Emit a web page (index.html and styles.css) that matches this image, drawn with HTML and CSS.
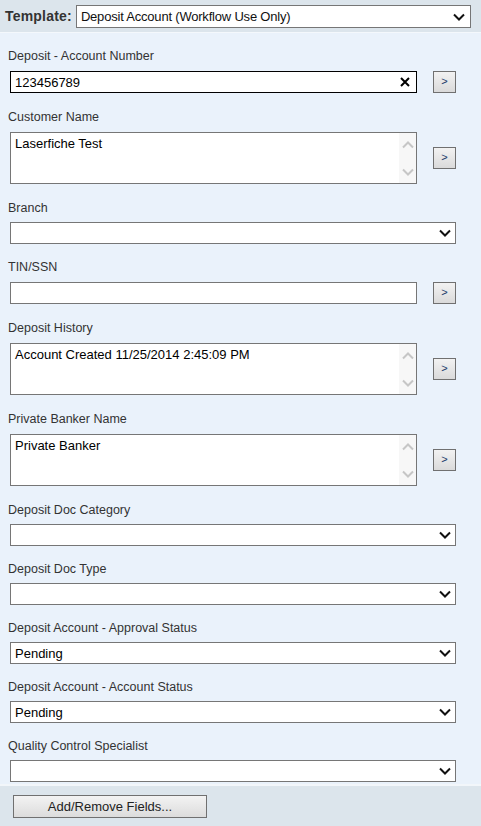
FILE: index.html
```html
<!DOCTYPE html>
<html>
<head>
<meta charset="utf-8">
<link rel="stylesheet" href="styles.css">
</head>
<body>
<div class="header">
  <span class="tpl-label">Template:</span>
  <div class="select tpl-select">
    <span class="val">Deposit Account (Workflow Use Only)</span>
    <svg class="chev" width="12" height="8" viewBox="0 0 12 8"><polyline points="1,1.5 6,6.5 11,1.5" fill="none" stroke="#111" stroke-width="2"/></svg>
  </div>
</div>
<div class="panel">
  <div class="field has-row">
    <div class="label">Deposit - Account Number</div>
    <div class="row">
      <div class="input focus"><span class="val">123456789</span>
        <svg class="clear" width="10" height="10" viewBox="0 0 10 10"><path d="M1 1L9 9M9 1L1 9" stroke="#000" stroke-width="2"/></svg>
      </div>
      <div class="btn">&gt;</div>
    </div>
  </div>
  <div class="field has-row">
    <div class="label">Customer Name</div>
    <div class="row">
      <div class="textarea"><span class="val">Laserfiche Test</span>
        <div class="sbar">
          <svg width="12" height="8" viewBox="0 0 12 8"><polyline points="1,6.5 6,1.5 11,6.5" fill="none" stroke="#c6c6c6" stroke-width="2"/></svg>
          <svg width="12" height="8" viewBox="0 0 12 8"><polyline points="1,1.5 6,6.5 11,1.5" fill="none" stroke="#c6c6c6" stroke-width="2"/></svg>
        </div>
      </div>
      <div class="btn">&gt;</div>
    </div>
  </div>
  <div class="field">
    <div class="label">Branch</div>
    <div class="select full">
      <span class="val"></span>
      <svg class="chev" width="12" height="8" viewBox="0 0 12 8"><polyline points="1,1.5 6,6.5 11,1.5" fill="none" stroke="#111" stroke-width="2"/></svg>
    </div>
  </div>
  <div class="field has-row">
    <div class="label">TIN/SSN</div>
    <div class="row">
      <div class="input"><span class="val"></span></div>
      <div class="btn">&gt;</div>
    </div>
  </div>
  <div class="field has-row">
    <div class="label">Deposit History</div>
    <div class="row">
      <div class="textarea"><span class="val">Account Created 11/25/2014 2:45:09 PM</span>
        <div class="sbar">
          <svg width="12" height="8" viewBox="0 0 12 8"><polyline points="1,6.5 6,1.5 11,6.5" fill="none" stroke="#c6c6c6" stroke-width="2"/></svg>
          <svg width="12" height="8" viewBox="0 0 12 8"><polyline points="1,1.5 6,6.5 11,1.5" fill="none" stroke="#c6c6c6" stroke-width="2"/></svg>
        </div>
      </div>
      <div class="btn">&gt;</div>
    </div>
  </div>
  <div class="field has-row">
    <div class="label">Private Banker Name</div>
    <div class="row">
      <div class="textarea"><span class="val">Private Banker</span>
        <div class="sbar">
          <svg width="12" height="8" viewBox="0 0 12 8"><polyline points="1,6.5 6,1.5 11,6.5" fill="none" stroke="#c6c6c6" stroke-width="2"/></svg>
          <svg width="12" height="8" viewBox="0 0 12 8"><polyline points="1,1.5 6,6.5 11,1.5" fill="none" stroke="#c6c6c6" stroke-width="2"/></svg>
        </div>
      </div>
      <div class="btn">&gt;</div>
    </div>
  </div>
  <div class="field">
    <div class="label">Deposit Doc Category</div>
    <div class="select full">
      <span class="val"></span>
      <svg class="chev" width="12" height="8" viewBox="0 0 12 8"><polyline points="1,1.5 6,6.5 11,1.5" fill="none" stroke="#111" stroke-width="2"/></svg>
    </div>
  </div>
  <div class="field">
    <div class="label">Deposit Doc Type</div>
    <div class="select full">
      <span class="val"></span>
      <svg class="chev" width="12" height="8" viewBox="0 0 12 8"><polyline points="1,1.5 6,6.5 11,1.5" fill="none" stroke="#111" stroke-width="2"/></svg>
    </div>
  </div>
  <div class="field">
    <div class="label">Deposit Account - Approval Status</div>
    <div class="select full">
      <span class="val">Pending</span>
      <svg class="chev" width="12" height="8" viewBox="0 0 12 8"><polyline points="1,1.5 6,6.5 11,1.5" fill="none" stroke="#111" stroke-width="2"/></svg>
    </div>
  </div>
  <div class="field">
    <div class="label">Deposit Account - Account Status</div>
    <div class="select full">
      <span class="val">Pending</span>
      <svg class="chev" width="12" height="8" viewBox="0 0 12 8"><polyline points="1,1.5 6,6.5 11,1.5" fill="none" stroke="#111" stroke-width="2"/></svg>
    </div>
  </div>
  <div class="field">
    <div class="label">Quality Control Specialist</div>
    <div class="select full">
      <span class="val"></span>
      <svg class="chev" width="12" height="8" viewBox="0 0 12 8"><polyline points="1,1.5 6,6.5 11,1.5" fill="none" stroke="#111" stroke-width="2"/></svg>
    </div>
  </div>
</div>
<div class="footer">
  <div class="add-btn">Add/Remove Fields...</div>
</div>
</body>
</html>
```

FILE: styles.css
```css
html, body {
  margin: 0;
  padding: 0;
  width: 481px;
  height: 826px;
  overflow: hidden;
  background: #dce5ec;
  font-family: "Liberation Sans", Arial, sans-serif;
  color: #222;
}

.header {
  height: 33px;
  box-sizing: border-box;
  display: flex;
  align-items: flex-start;
  padding: 5px 10px 0 5px;
  gap: 4px;
  background: #dce5ec;
  border-bottom: 1px solid #f4f8fc;
}

.tpl-label {
  font-weight: bold;
  font-size: 14px;
  letter-spacing: 0.2px;
  line-height: 23px;
  color: #333;
}

.select, .input, .textarea {
  box-sizing: border-box;
  background: #fff;
  border: 1px solid #767676;
  display: flex;
  align-items: center;
  position: relative;
  font-size: 13px;
  color: #000;
}

.tpl-select {
  flex: 1;
  height: 23px;
  padding: 0 4px 0 4px;
  color: #111;
  letter-spacing: -0.2px;
}

.val {
  flex: 1;
  white-space: nowrap;
}

.chev {
  display: block;
  margin-right: 1px;
}

.panel {
  background: #eaf2fb;
  padding: 15px 25px 2px 8px;
  border-bottom: 2px solid #f2f6fa;
}

.field {
  margin-bottom: 15px;
}

.field.has-row {
  margin-bottom: 16px;
}

.field.has-row .label {
  margin-bottom: 7px;
}

.field:last-child {
  margin-bottom: 0;
}

.label {
  font-size: 12.5px;
  line-height: 16px;
  height: 16px;
  color: #333;
  margin-bottom: 6px;
}

.row {
  display: flex;
  align-items: center;
  gap: 16px;
  margin-left: 2px;
}

.input {
  width: 407px;
  height: 22px;
  padding: 0 6px 0 4px;
}

.input.focus {
  border-color: #000;
}

.clear {
  display: block;
}

.textarea {
  width: 407px;
  height: 52px;
  align-items: stretch;
  padding: 0 0 0 4px;
}

.textarea .val {
  padding-top: 3px;
  line-height: 16px;
}

.sbar {
  width: 17px;
  background: #f7f7f7;
  display: flex;
  flex-direction: column;
  justify-content: space-between;
  align-items: center;
  padding: 8px 0 7px;
}

.sbar svg {
  display: block;
}

.btn {
  box-sizing: border-box;
  width: 23px;
  height: 22px;
  border: 1px solid #707070;
  background: linear-gradient(#f2f2f2, #dadada);
  font-size: 11px;
  line-height: 19px;
  text-align: center;
  color: #1a3a6a;
}

.select.full {
  margin-left: 2px;
  width: 446px;
  height: 22px;
  padding: 0 3px 0 4px;
}

.footer {
  padding: 9px 13px;
}

.add-btn {
  box-sizing: border-box;
  width: 194px;
  height: 23px;
  border: 1px solid #707070;
  background: linear-gradient(#f3f3f3, #dcdcdc);
  font-size: 13px;
  line-height: 21px;
  text-align: center;
  color: #222;
}
```
